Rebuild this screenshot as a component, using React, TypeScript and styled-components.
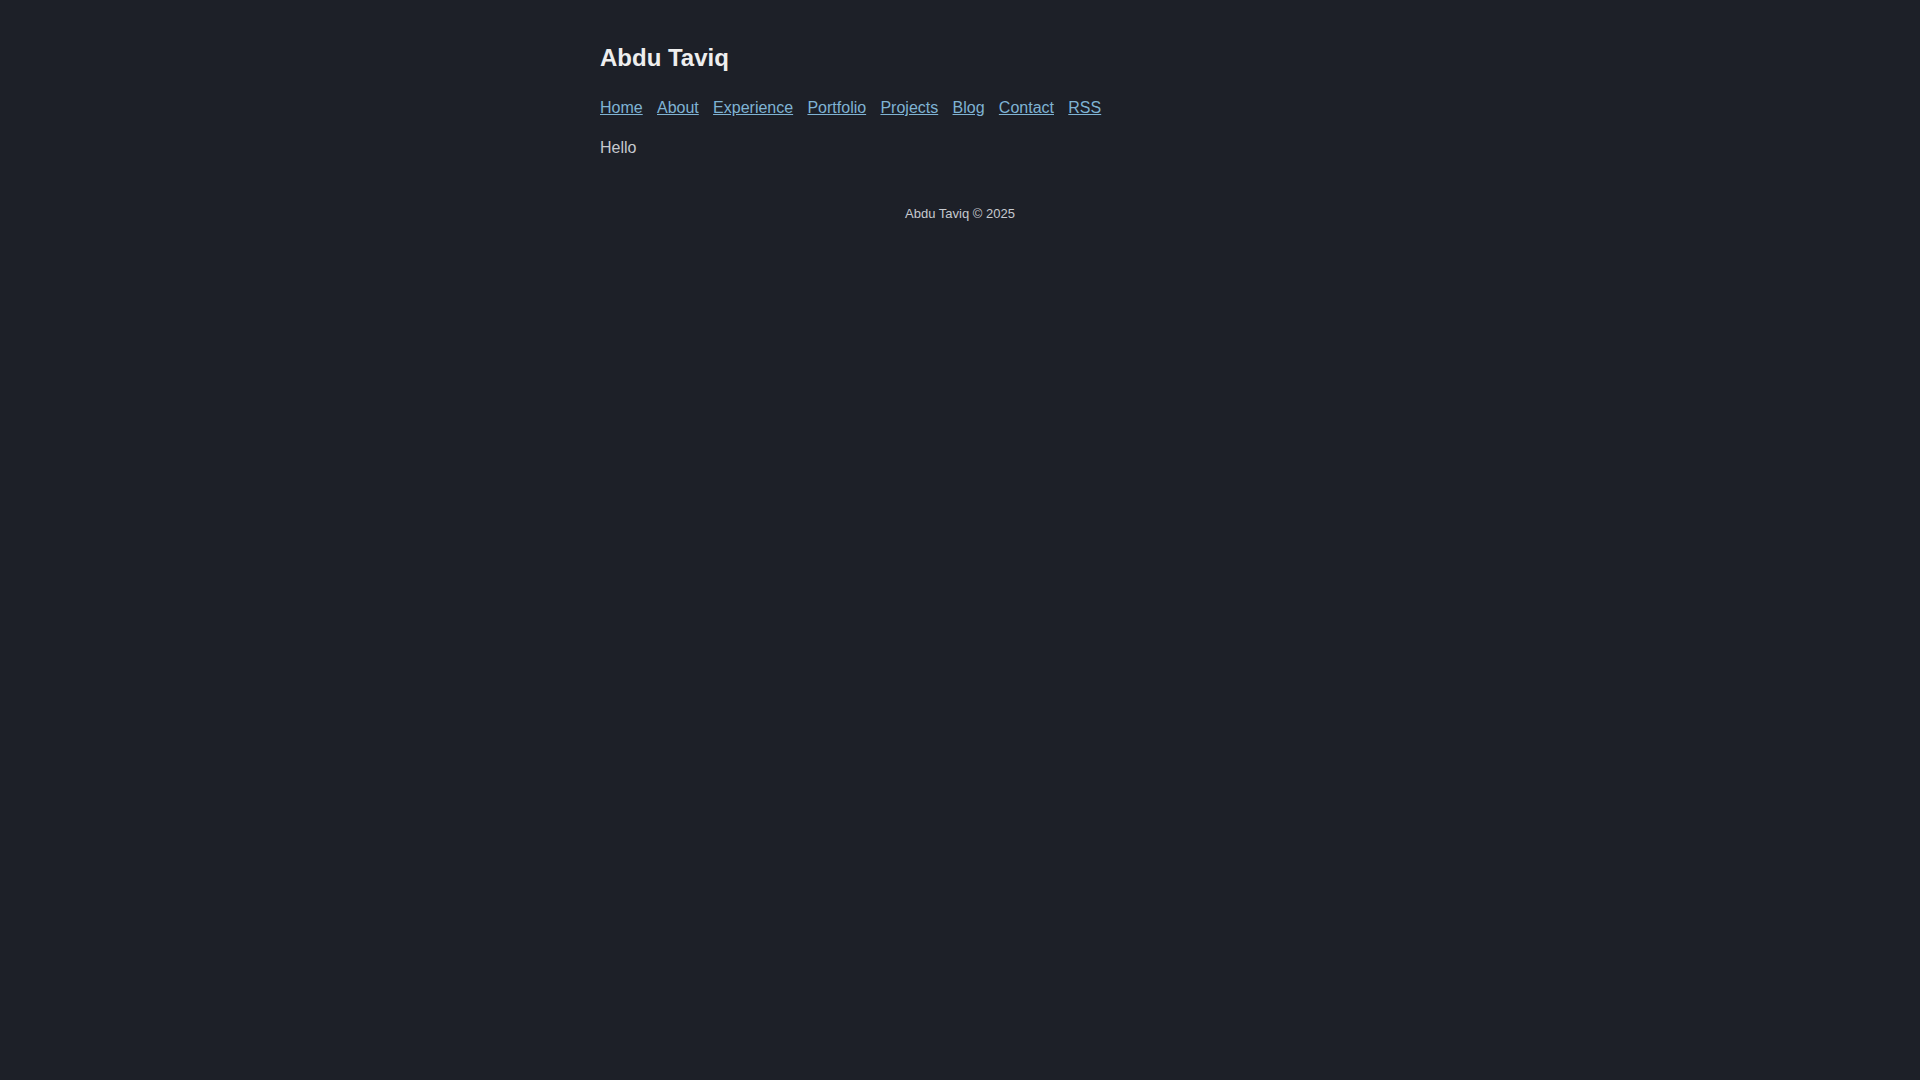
import React from 'react';
import styled, { createGlobalStyle } from 'styled-components';

const GlobalStyle = createGlobalStyle`
  html, body {
    margin: 0;
    padding: 0;
    background: #1d2028;
  }
  body {
    font-family: "Liberation Sans", Arial, sans-serif;
    color: #c6c9cf;
  }
`;

const Page = styled.div`
  max-width: 720px;
  margin: 0 auto;
  padding: 44px 0 0;
`;

const Header = styled.header`
  display: flex;
  flex-direction: column;
`;

const Title = styled.h1`
  font-size: 24px;
  line-height: 28px;
  font-weight: 700;
  color: #eeeeee;
  margin: 0;
`;

const Nav = styled.nav`
  display: flex;
  gap: 14.3px;
  margin-top: 26px;
`;

const NavLink = styled.a`
  font-size: 16px;
  line-height: 20px;
  color: #7fb3d4;
  text-decoration: underline;
`;

const Main = styled.main`
  margin-top: 20px;
  font-size: 16px;
  line-height: 20px;
`;

const Footer = styled.footer`
  text-align: center;
  font-size: 13px;
  line-height: 16px;
  color: #c6c9cf;
  margin-top: 48px;
`;

const links = ['Home', 'About', 'Experience', 'Portfolio', 'Projects', 'Blog', 'Contact', 'RSS'];

export default function App() {
  return (
    <>
      <GlobalStyle />
      <Page>
        <Header>
          <Title>Abdu Taviq</Title>
          <Nav>
            {links.map((l) => (
              <NavLink key={l} href="#">
                {l}
              </NavLink>
            ))}
          </Nav>
        </Header>
        <Main>Hello</Main>
        <Footer>Abdu Taviq © 2025</Footer>
      </Page>
    </>
  );
}
